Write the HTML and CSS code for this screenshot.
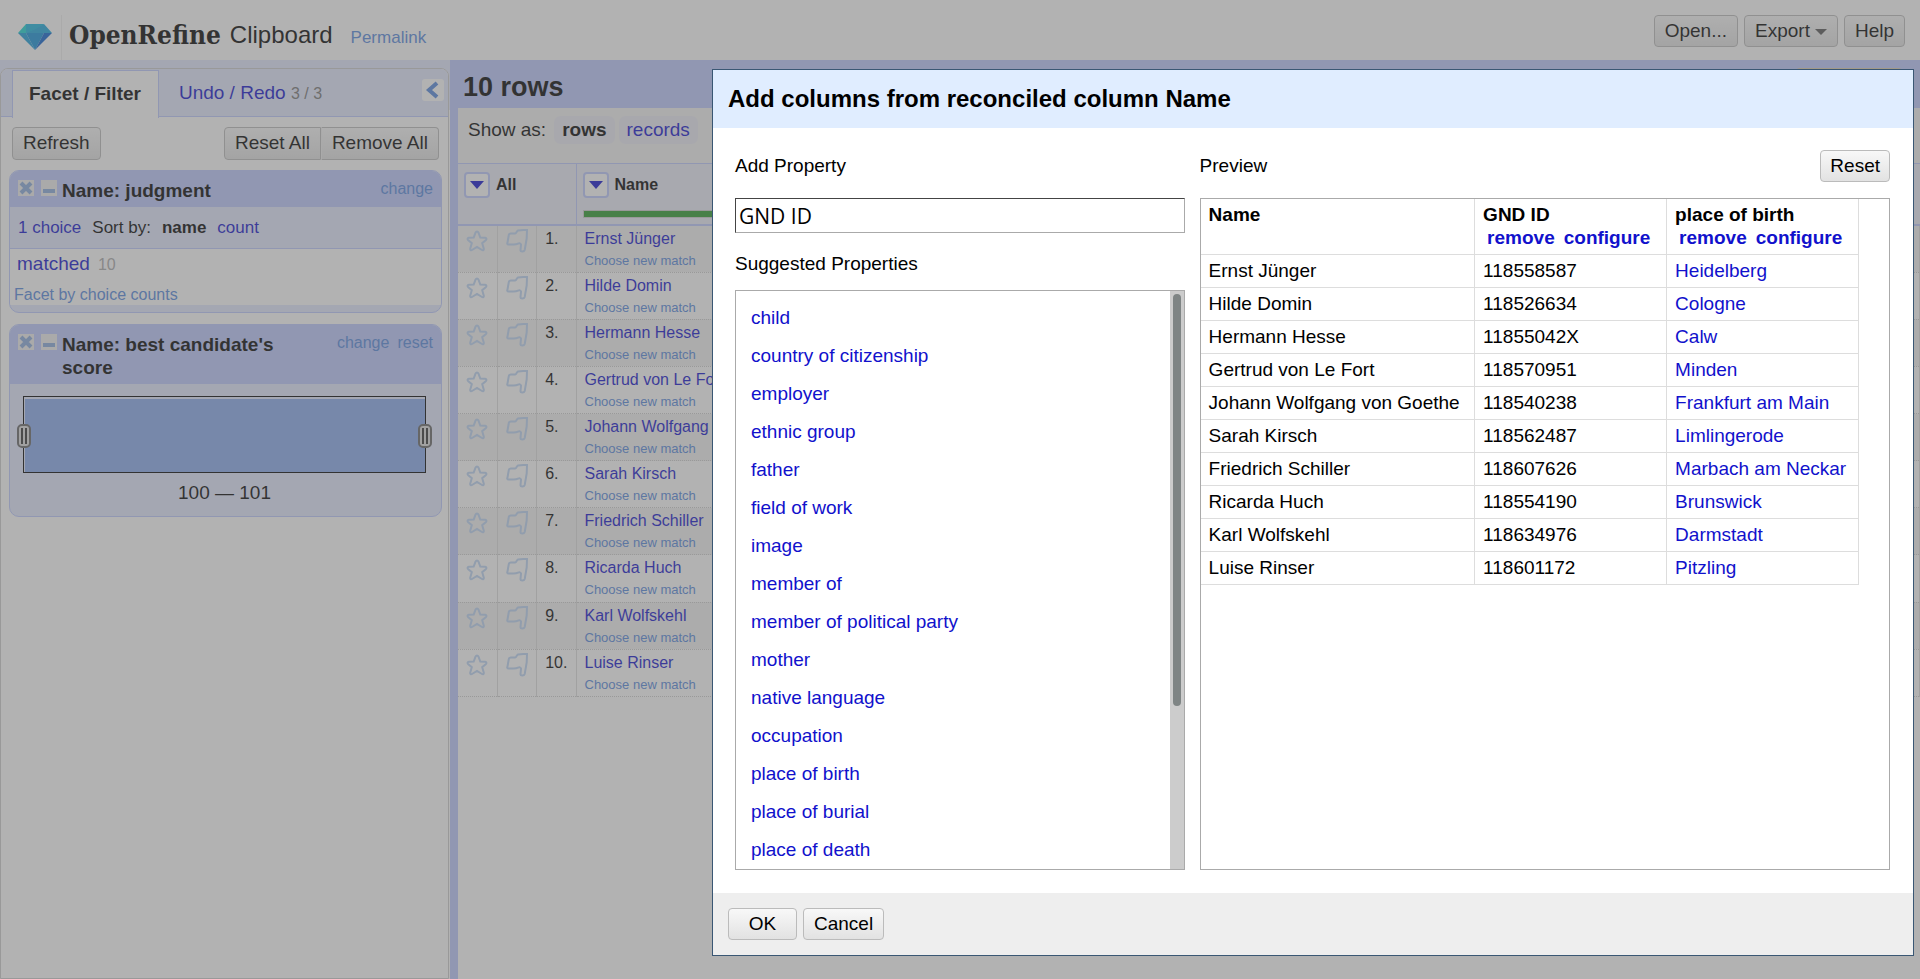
FILE: index.html
```html
<!DOCTYPE html>
<html lang="en">
<head>
<meta charset="utf-8">
<title>Clipboard - OpenRefine</title>
<link rel="stylesheet" href="styles.css">
</head>
<body>
<svg class="defs" aria-hidden="true">
  <symbol id="star" viewBox="0 0 22 22"><path d="M11 1.500c.7 0 1.100.4 1.400 1l1.900 5 4.900.3c1.300.2 1.600 1.300.8 2.100l-3.800 3.300 1.600 5.500c.2 1.300-.8 1.900-1.800 1.300L11 17l-5 3c-1 .6-2 0-1.800-1.300l1.600-5.500L2 9.900c-.8-.8-.5-1.900.8-2.100l4.900-.3 1.900-5c.3-.6.700-1 1.400-1z"/></symbol>
  <symbol id="thumb" viewBox="0 0 22 24"><path d="M12 1.500C15 .8 18 1.200 21 1l-.3 8.500-2 11.500c-.6 2-4.200 2-4.200 0l.5-5.500c-.3-1.300-1.500-1.500-3-.8-1.500.8-3 .8-4.500.8H2.500c-1.300 0-1.500-1-1-2L2.800 6c.3-1.200.8-1.500 2-1.500h4.400c1.200 0 1.500-2.500 2.800-3z"/></symbol>
  <symbol id="close" viewBox="0 0 16 16"><path d="M3 3l10 10M13 3L3 13"/></symbol>
  <symbol id="minus" viewBox="0 0 16 16"><path d="M2 11h12"/></symbol>
</svg>

<div class="app">
  <header class="topbar">
    <svg class="gem" viewBox="0 0 34 26" aria-hidden="true">
      <path fill="#18d5d0" d="M8 0h9l-9 9H0z"/><path fill="#20c0dc" d="M8 0h18l-9 9H8z"/>
      <path fill="#1ba7dd" d="M26 0l8 9H8l9-4z"/><path fill="#18b4de" d="M8 0v9l9-4 9-5z"/>
      <path fill="#189cd8" d="M0 9h8l9 17z"/><path fill="#1290d8" d="M8 9h18l-9 17z"/><path fill="#0c62cf" d="M26 9h8L17 26z"/>
    </svg>
    <span class="brand">OpenRefine</span>
    <span class="project">Clipboard</span>
    <a class="permalink" href="#">Permalink</a>
    <nav class="actions">
      <button class="btn" type="button">Open...</button>
      <button class="btn" type="button">Export <span class="caret"></span></button>
      <button class="btn" type="button">Help</button>
    </nav>
  </header>

  <div class="workspace">
    <aside class="side">
      <div class="side-panel">
        <div class="tabs">
          <a class="tab active" href="#">Facet / Filter</a>
          <a class="tab" href="#">Undo / Redo <small>3 / 3</small></a>
          <button class="collapse" type="button" aria-label="Hide panel"><svg viewBox="0 0 22 22"><path d="M15 4l-8 7 8 7"/></svg></button>
        </div>
        <div class="facet-tools">
          <button class="btn" type="button">Refresh</button>
          <div class="btn-group"><button class="btn" type="button">Reset All</button><button class="btn" type="button">Remove All</button></div>
        </div>
        <section class="facet">
          <div class="facet-head">
            <button class="mini" type="button" aria-label="Remove"><svg><use href="#close"/></svg></button>
            <button class="mini" type="button" aria-label="Minimize"><svg><use href="#minus"/></svg></button>
            <h3>Name: judgment</h3>
            <span class="facet-links"><a href="#">change</a></span>
          </div>
          <div class="facet-sort"><a href="#">1 choice</a><span>Sort by:</span><b>name</b><a href="#">count</a></div>
          <div class="facet-body">
            <div class="choice"><a href="#">matched</a><span>10</span></div>
            <a class="by-count" href="#">Facet by choice counts</a>
          </div>
        </section>
        <section class="facet">
          <div class="facet-head">
            <button class="mini" type="button" aria-label="Remove"><svg><use href="#close"/></svg></button>
            <button class="mini" type="button" aria-label="Minimize"><svg><use href="#minus"/></svg></button>
            <h3>Name: best candidate's score</h3>
            <span class="facet-links"><a href="#">change</a><a href="#">reset</a></span>
          </div>
          <div class="range">
            <div class="histogram"><i class="handle from"></i><i class="handle to"></i></div>
            <div class="range-label">100 — 101</div>
          </div>
        </section>
      </div>
    </aside>

    <main class="main">
      <div class="summary"><h2>10 rows</h2><div class="extensions"></div></div>
      <div class="data">
        <div class="view-bar"><span>Show as:</span><b class="mode">rows</b><a class="mode" href="#">records</a></div>
        <table class="grid">
          <thead><tr>
            <th colspan="3"><div class="col-head"><button class="menu" type="button" aria-label="All menu"></button>All</div></th>
            <th><div class="col-head"><button class="menu" type="button" aria-label="Name menu"></button>Name</div><div class="recon-bar"></div></th>
          </tr></thead>
          <tbody>
            <tr><td><svg><use href="#star"/></svg></td><td><svg><use href="#thumb"/></svg></td><td>1.</td><td><a href="#">Ernst Jünger</a><a class="rematch" href="#">Choose new match</a></td></tr>
            <tr><td><svg><use href="#star"/></svg></td><td><svg><use href="#thumb"/></svg></td><td>2.</td><td><a href="#">Hilde Domin</a><a class="rematch" href="#">Choose new match</a></td></tr>
            <tr><td><svg><use href="#star"/></svg></td><td><svg><use href="#thumb"/></svg></td><td>3.</td><td><a href="#">Hermann Hesse</a><a class="rematch" href="#">Choose new match</a></td></tr>
            <tr><td><svg><use href="#star"/></svg></td><td><svg><use href="#thumb"/></svg></td><td>4.</td><td><a href="#">Gertrud von Le Fort</a><a class="rematch" href="#">Choose new match</a></td></tr>
            <tr><td><svg><use href="#star"/></svg></td><td><svg><use href="#thumb"/></svg></td><td>5.</td><td><a href="#">Johann Wolfgang von Goethe</a><a class="rematch" href="#">Choose new match</a></td></tr>
            <tr><td><svg><use href="#star"/></svg></td><td><svg><use href="#thumb"/></svg></td><td>6.</td><td><a href="#">Sarah Kirsch</a><a class="rematch" href="#">Choose new match</a></td></tr>
            <tr><td><svg><use href="#star"/></svg></td><td><svg><use href="#thumb"/></svg></td><td>7.</td><td><a href="#">Friedrich Schiller</a><a class="rematch" href="#">Choose new match</a></td></tr>
            <tr><td><svg><use href="#star"/></svg></td><td><svg><use href="#thumb"/></svg></td><td>8.</td><td><a href="#">Ricarda Huch</a><a class="rematch" href="#">Choose new match</a></td></tr>
            <tr><td><svg><use href="#star"/></svg></td><td><svg><use href="#thumb"/></svg></td><td>9.</td><td><a href="#">Karl Wolfskehl</a><a class="rematch" href="#">Choose new match</a></td></tr>
            <tr><td><svg><use href="#star"/></svg></td><td><svg><use href="#thumb"/></svg></td><td>10.</td><td><a href="#">Luise Rinser</a><a class="rematch" href="#">Choose new match</a></td></tr>
          </tbody>
        </table>
      </div>
    </main>
  </div>
</div>

<div class="overlay"></div>

<div class="dialog" role="dialog" aria-labelledby="dialog-title">
  <h1 class="dialog-title" id="dialog-title">Add columns from reconciled column Name</h1>
  <div class="dialog-body">
    <div class="left">
      <label class="label" for="property">Add Property</label>
      <input class="property" id="property" type="text" value="GND ID">
      <div class="label sub">Suggested Properties</div>
      <div class="suggest">
        <ul>
          <li><a href="#">child</a></li>
          <li><a href="#">country of citizenship</a></li>
          <li><a href="#">employer</a></li>
          <li><a href="#">ethnic group</a></li>
          <li><a href="#">father</a></li>
          <li><a href="#">field of work</a></li>
          <li><a href="#">image</a></li>
          <li><a href="#">member of</a></li>
          <li><a href="#">member of political party</a></li>
          <li><a href="#">mother</a></li>
          <li><a href="#">native language</a></li>
          <li><a href="#">occupation</a></li>
          <li><a href="#">place of birth</a></li>
          <li><a href="#">place of burial</a></li>
          <li><a href="#">place of death</a></li>
        </ul>
        <div class="track"><div class="thumb"></div></div>
      </div>
    </div>
    <div class="right">
      <div class="label preview-head">Preview<button class="btn" type="button">Reset</button></div>
      <div class="preview">
        <table>
          <thead><tr>
            <th>Name</th>
            <th>GND ID<div class="col-links"><a href="#">remove</a><a href="#">configure</a></div></th>
            <th>place of birth<div class="col-links"><a href="#">remove</a><a href="#">configure</a></div></th>
          </tr></thead>
          <tbody>
            <tr><td>Ernst Jünger</td><td>118558587</td><td><a href="#">Heidelberg</a></td></tr>
            <tr><td>Hilde Domin</td><td>118526634</td><td><a href="#">Cologne</a></td></tr>
            <tr><td>Hermann Hesse</td><td>11855042X</td><td><a href="#">Calw</a></td></tr>
            <tr><td>Gertrud von Le Fort</td><td>118570951</td><td><a href="#">Minden</a></td></tr>
            <tr><td>Johann Wolfgang von Goethe</td><td>118540238</td><td><a href="#">Frankfurt am Main</a></td></tr>
            <tr><td>Sarah Kirsch</td><td>118562487</td><td><a href="#">Limlingerode</a></td></tr>
            <tr><td>Friedrich Schiller</td><td>118607626</td><td><a href="#">Marbach am Neckar</a></td></tr>
            <tr><td>Ricarda Huch</td><td>118554190</td><td><a href="#">Brunswick</a></td></tr>
            <tr><td>Karl Wolfskehl</td><td>118634976</td><td><a href="#">Darmstadt</a></td></tr>
            <tr><td>Luise Rinser</td><td>118601172</td><td><a href="#">Pitzling</a></td></tr>
          </tbody>
        </table>
      </div>
    </div>
  </div>
  <div class="dialog-foot">
    <button class="btn ok" type="button">OK</button>
    <button class="btn" type="button">Cancel</button>
  </div>
</div>
</body>
</html>
```

FILE: styles.css
```css
* { box-sizing: border-box; }
body { margin: 0; font: 19px/23px "Liberation Sans", Arial, sans-serif; color: #000; background: #fff; overflow: hidden; }
a { color: #11c; text-decoration: none; }
h1, h2, h3, ul { margin: 0; padding: 0; }
.defs { position: absolute; width: 0; height: 0; }
.app { height: 100vh; display: flex; flex-direction: column; }

.btn { height: 32px; padding: 0 10px 2px; border: 1px solid #bbb; border-radius: 4px; background: linear-gradient(#f8f8f8, #e2e2e2); color: inherit; font: inherit; display: inline-flex; align-items: center; justify-content: center; }
.caret { margin: 3px 0 0 5px; border: 6px solid transparent; border-top-color: #555; border-bottom: 0; }
.btn-group { display: flex; }
.btn-group .btn:first-child { border-radius: 4px 0 0 4px; }
.btn-group .btn:last-child { border-radius: 0 4px 4px 0; border-left-color: #eee; }

.topbar { height: 60px; flex: none; display: flex; align-items: center; padding: 0 15px 0 18px; }
.gem { width: 34px; height: 26px; margin: 14px 9px 0 0; }
.brand { align-self: flex-end; height: 45px; padding: 7px 0 0 7px; border-left: 1px solid #eee; font: bold 26px/26px "DejaVu Serif Condensed", "DejaVu Serif", serif; }
.project { margin: 10px 18px 0 9px; font-size: 24px; line-height: 28px; }
.permalink { margin-top: 14px; font-size: 17px; color: #58d; }
.actions { display: flex; gap: 6px; margin: -8px 0 0 auto; padding-top: 10px; }

.workspace { flex: 1; display: flex; min-height: 0; }
.side { width: 450px; flex: none; padding-top: 8px; background: linear-gradient(#e3e9ff 50px, #fff 50px); }
.side-panel { height: 100%; margin-right: 1px; border: 1px solid #ccc; border-radius: 8px 8px 0 0; overflow: hidden; background: #fff; }
.tabs { height: 48px; display: flex; align-items: stretch; padding: 1px 4px 0 11px; background: #e3e9ff; border-bottom: 1px solid #bcc9ff; }
.tab { padding: 11px 20px 0; }
.tab small { font-size: 16px; color: #777; }
.tab.active { height: 48px; padding: 11px 17px 0 16px; border: 1px solid #bcc9ff; border-bottom: 0; background: #fff; color: #000; font-weight: bold; }
.collapse { width: 22px; height: 22px; margin: 9px 0 0 auto; padding: 0; border: 0; border-radius: 3px; background: #fff; }
.collapse svg { display: block; fill: none; stroke: #58d; stroke-width: 4; }
.facet-tools { display: flex; justify-content: space-between; padding: 10px 9px 10px 11px; }
.facet-tools .btn { height: 33px; }

.facet { margin: 0 6px 11px 8px; border: 1px solid #bcc9ff; border-radius: 10px; overflow: hidden; background: #e3e9ff; }
.facet-head { display: flex; align-items: flex-start; gap: 7px; padding: 8px 8px 5px; background: #bcc9ff; }
.facet-head h3 { flex: 1; font-size: 19px; line-height: 23px; padding: 0 30px 0 0; margin: 0 0 0 -2px; }
.mini { width: 16px; height: 16px; margin-top: 1px; padding: 0; border: 0; background: #eee; }
.mini svg { display: block; width: 16px; height: 16px; fill: none; stroke: #8ad; stroke-width: 4; }
.facet-links { display: flex; gap: 8px; font-size: 16px; line-height: 20px; }
.facet-links a, .by-count { color: #58d; }
.facet-sort { display: flex; gap: 11px; padding: 9px 8px; font-size: 17px; border-bottom: 1px solid #bcc9ff; }
.facet-body { height: 56px; margin-bottom: 7px; padding: 3px 4px 0; background: #fff; }
.choice { display: flex; gap: 8px; padding-left: 3px; }
.choice span { font-size: 16px; line-height: 25px; color: #aaa; }
.by-count { display: block; margin-top: 7px; font-size: 16px; line-height: 22px; }
.range { padding: 12px 15px 12px 13px; }
.histogram { position: relative; height: 77px; border: 1px solid #000; background: #88abee; box-shadow: inset 1px 2px #e3e9ff; }
.handle { position: absolute; top: 27px; width: 14px; height: 24px; border: 2px solid #666; border-radius: 5px; background: linear-gradient(90deg, transparent 2px, #333 2px 4px, #ddd 4px 6px, #333 6px 8px, transparent 8px) center / 10px 16px no-repeat #ddd; }
.handle.from { left: -7px; }
.handle.to { right: -7px; }
.range-label { padding-top: 8px; text-align: center; }

.main { flex: 1; display: flex; flex-direction: column; padding-left: 8px; background: #bcc9ff; min-width: 0; }
.summary { height: 48px; display: flex; justify-content: space-between; padding: 8px 16px 0 5px; }
.summary h2 { font-size: 27px; line-height: 38px; }
.extensions { width: 110px; height: 30px; border: 1px solid #dca; border-radius: 6px; }
.data { flex: 1; background: #fff; }
.view-bar { height: 55px; display: flex; align-items: flex-start; gap: 4px; padding: 8px 10px; background: #f2f2f2; line-height: 28px; }
.mode { padding: 0 8px; border-radius: 7px; background: #eaeaf5; }
.view-bar span { margin-right: 4px; }
.grid { width: 100%; height: 534px; border-collapse: collapse; table-layout: fixed; font-size: 16px; line-height: 22px; }
.grid th { height: 61px; padding: 8px 6px 0; vertical-align: top; text-align: left; background: #eaecf8; border-top: 1px solid #bcc9ff; border-bottom: 2px solid #bcc9ff; }
.grid th + th { border-left: 1px solid #bcc9ff; }
.grid th:first-child { width: 118px; }
.col-head { display: flex; align-items: center; gap: 6px; height: 26px; }
.menu { width: 26px; height: 26px; padding: 0; display: flex; align-items: center; justify-content: center; border: 2px solid #bcc9ff; border-radius: 4px; background: #fff; }
.menu::before { content: ""; border: 7px solid transparent; border-top: 8px solid #11c; border-bottom: 0; }
.recon-bar { height: 8px; margin-top: 12px; border: 1px solid #ccc; background: #2b9a2b; }
.grid td { padding: 2px 0 0 8px; vertical-align: top; border-bottom: 1px dotted #ccc; border-right: 1px solid #ddd; }
.grid tbody tr:nth-child(odd) { background: #f2f2f2; }
.grid td svg { display: block; width: 22px; height: 24px; margin-top: 1px; fill: none; stroke: #bcd4f4; stroke-width: 2; }
.grid td a { display: block; white-space: nowrap; }
.grid .rematch { font-size: 13px; line-height: 22px; color: #58d; }

.overlay { position: fixed; inset: 0; background: #666; opacity: .5; }
.dialog { position: fixed; top: 69px; right: 6px; bottom: 23px; width: 1202px; display: flex; flex-direction: column; border: 1px solid #3a5774; background: #fff; }
.dialog-title { padding: 15px 15px; font-size: 24px; line-height: 28px; background: #e0edff; }
.dialog-body { flex: 1; display: flex; gap: 15px; padding: 16px 23px 23px 22px; min-height: 0; }
.left { flex: 450; display: flex; flex-direction: column; min-width: 0; }
.right { flex: 691; display: flex; flex-direction: column; min-width: 0; }
.label { height: 54px; padding-top: 10px; display: block; }
.label.sub { height: 57px; padding-top: 19px; }
.property { width: 100%; height: 35px; padding: 0 3px; border: 1px solid #aaa; border-top-color: #444; border-left-color: #444; font: 21px "Open Sans", sans-serif; }
.suggest { flex: 1; display: flex; border: 1px solid #aaa; min-height: 0; overflow: hidden; }
.suggest ul { flex: 1; list-style: none; padding: 8px 15px 0; }
.suggest li { height: 38px; line-height: 38px; }
.track { width: 14px; padding: 3px; background: #ccc; }
.thumb { width: 8px; height: 72%; border-radius: 4px; background: #7f8585; }
.preview-head { display: flex; justify-content: space-between; }
.preview-head .btn { height: 32px; margin-top: -4px; padding: 0 9px 2px; }
.preview { flex: 1; border: 1px solid #aaa; }
.preview table { border-collapse: collapse; }
.preview th, .preview td { padding: 5px 8px; height: 33px; text-align: left; vertical-align: top; line-height: 22px; border: 1px solid #ddd; border-top: 0; min-width: 192px; }
.preview th { height: 55px; line-height: 23px; padding: 4px 8px; }
.preview th:first-child, .preview td:first-child { border-left: 0; min-width: 274px; }
.col-links { display: flex; gap: 9px; padding: 0 4px; }
.dialog-foot { display: flex; gap: 6px; padding: 15px; background: #eee; }
.ok { width: 69px; }
```
